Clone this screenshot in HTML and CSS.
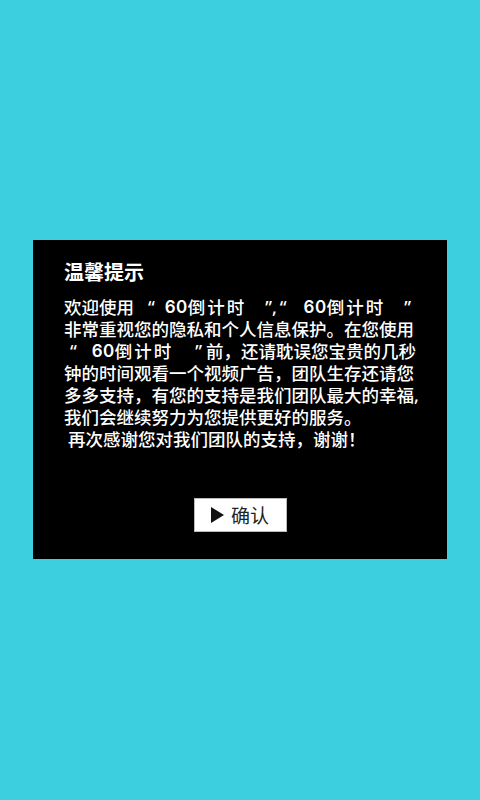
FILE: index.html
```html
<!DOCTYPE html>
<html lang="zh-CN">
<head>
<meta charset="utf-8">
<title>温馨提示</title>
<link rel="stylesheet" href="styles.css">
</head>
<body>
<main class="screen">
  <section class="dialog">
    <h1 class="title">温馨提示</h1>
    <div class="message">
      <div class="line">欢迎使用<span class="q q-open">“</span><span class="app"><span class="num">60</span>倒计时</span><span class="q q-close">”</span><span class="q">,</span><span class="q q-open2">“</span><span class="app"><span class="num">60</span>倒计时</span><span class="q q-close">”</span></div>
      <div class="line">非常重视您的隐私和个人信息保护。在您使用</div>
      <div class="line"><span class="q q-start">“</span><span class="app"><span class="num">60</span>倒计时</span><span class="q q-close2">”</span>前，还请耽误您宝贵的几秒</div>
      <div class="line">钟的时间观看一个视频广告，团队生存还请您</div>
      <div class="line">多多支持，有您的支持是我们团队最大的幸福<span class="q">,</span></div>
      <div class="line">我们会继续努力为您提供更好的服务。</div>
      <div class="line indent">再次感谢您对我们团队的支持，谢谢！</div>
    </div>
    <div class="actions">
      <button class="confirm" type="button">
        <svg class="play" width="13" height="16" viewBox="0 0 13 16"><path d="M0 0 L13 8 L0 16 Z" fill="#111"/></svg>
        <span class="confirm-label">确认</span>
      </button>
    </div>
  </section>
</main>
</body>
</html>
```
FILE: styles.css
```css
html, body {
  margin: 0;
  padding: 0;
}
body {
  background: #3bcfdf;
  font-family: "Noto Sans CJK SC", "Noto Sans", sans-serif;
}
.screen {
  height: 800px;
  display: flex;
  align-items: center;
  justify-content: center;
}
.dialog {
  width: 414px;
  box-sizing: border-box;
  background: #000;
  color: #fff;
  padding: 20px 31px 27px 31px;
  margin-top: -1px;
}
.title {
  margin: 0 0 12px 0;
  font-size: 20px;
  line-height: 24px;
  font-weight: 700;
}
.message {
  font-size: 17.5px;
  line-height: 22px;
  font-weight: 500;
}
.line {
  white-space: nowrap;
  height: 22px;
}
.q,
.app,
.num {
  display: inline-block;
  line-height: 22px;
  height: 22px;
  vertical-align: top;
}
.q {
  font-family: "Noto Sans", sans-serif;
}
.q-open {
  margin-left: 14px;
  margin-right: 10px;
}
.q-open2 {
  margin-left: 3px;
  margin-right: 17px;
}
.q-start {
  margin-left: 6px;
  margin-right: 15px;
}
.q-close {
  margin-left: 19px;
}
.q-close2 {
  margin-left: 22px;
  margin-right: 4px;
}
.app {
  letter-spacing: 2px;
}
.num {
  font-family: "Inter", sans-serif;
  font-weight: 600;
  font-size: 17px;
  letter-spacing: 0.5px;
}
.indent {
  padding-left: 4px;
}
.actions {
  display: flex;
  justify-content: center;
  margin-top: 48px;
}
.confirm {
  width: 93px;
  height: 34px;
  box-sizing: border-box;
  background: #fff;
  border: 1px solid #bbb;
  border-radius: 0;
  display: flex;
  align-items: center;
  justify-content: center;
  gap: 7px;
  padding: 0;
  font-family: "Noto Sans CJK SC", sans-serif;
  font-size: 19px;
  color: #222;
}
.confirm-label {
  line-height: 24px;
}
.play {
  display: block;
}
```
